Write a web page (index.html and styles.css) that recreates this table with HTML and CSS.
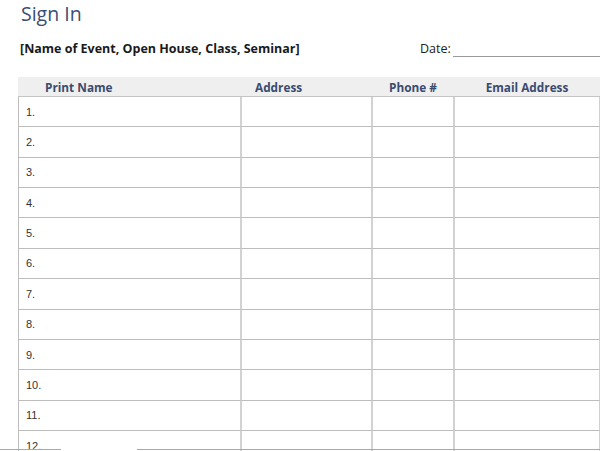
FILE: index.html
```html
<!DOCTYPE html>
<html>
<head>
<meta charset="utf-8">
<link rel="stylesheet" href="styles.css">
</head>
<body>
<div class="page">
  <h1 class="title">Sign In</h1>
  <div class="info">
    <div class="event">[Name of Event, Open House, Class, Seminar]</div>
    <div class="date"><span class="date-label">Date:</span><span class="date-line"></span></div>
  </div>
  <div class="sheet">
    <div class="head">
      <div class="h h-name">Print Name</div>
      <div class="h h-addr">Address</div>
      <div class="h h-phone">Phone #</div>
      <div class="h h-email">Email Address</div>
    </div>
    <div class="rows">
      <div class="c c1">1.</div><div class="c"></div><div class="c"></div><div class="c last"></div>
      <div class="c c1">2.</div><div class="c"></div><div class="c"></div><div class="c last"></div>
      <div class="c c1">3.</div><div class="c"></div><div class="c"></div><div class="c last"></div>
      <div class="c c1">4.</div><div class="c"></div><div class="c"></div><div class="c last"></div>
      <div class="c c1">5.</div><div class="c"></div><div class="c"></div><div class="c last"></div>
      <div class="c c1">6.</div><div class="c"></div><div class="c"></div><div class="c last"></div>
      <div class="c c1">7.</div><div class="c"></div><div class="c"></div><div class="c last"></div>
      <div class="c c1">8.</div><div class="c"></div><div class="c"></div><div class="c last"></div>
      <div class="c c1">9.</div><div class="c"></div><div class="c"></div><div class="c last"></div>
      <div class="c c1">10.</div><div class="c"></div><div class="c"></div><div class="c last"></div>
      <div class="c c1">11.</div><div class="c"></div><div class="c"></div><div class="c last"></div>
      <div class="c c1">12.</div><div class="c"></div><div class="c"></div><div class="c last"></div>
    </div>
  </div>
  <div class="edge edge-a"></div>
  <div class="edge edge-b"></div>
</div>
</body>
</html>
```
FILE: styles.css
```css
* { box-sizing: border-box; }
html, body { margin: 0; padding: 0; background: #fff; }
.page {
  position: relative;
  width: 600px;
  height: 451px;
  overflow: hidden;
  background: #fff;
}
.title {
  margin: 0;
  padding: 1px 0 0 21px;
  height: 32px;
  font-family: "Open Sans", sans-serif;
  font-weight: 400;
  font-size: 19.5px;
  line-height: 26px;
  color: #3b4e73;
}
.info {
  display: flex;
  align-items: flex-end;
  height: 25px;
  padding-left: 20px;
}
.event {
  font-family: "Open Sans", sans-serif;
  font-weight: 700;
  font-size: 12.5px;
  line-height: 16px;
  color: #1a1a1a;
  width: 400px;
}
.date {
  display: flex;
  align-items: flex-end;
}
.date-label {
  font-family: "Open Sans", sans-serif;
  font-size: 12.5px;
  line-height: 16px;
  color: #222;
  padding-right: 2px;
}
.date-line {
  width: 147px;
  height: 1px;
  background: #9a9a9a;
  margin-bottom: 0px;
}
.sheet {
  margin: 20px 0 0 18px;
  width: 582px;
}
.head {
  display: grid;
  grid-template-columns: 223px 131px 82px 146px;
  height: 20px;
  background: #efefef;
  border-bottom: 1px solid #c4c4c4;
}
.h {
  font-family: "Open Sans", sans-serif;
  font-weight: 700;
  font-size: 11.8px;
  line-height: 21px;
  color: #3a4b70;
}
.h-name { padding-left: 27px; }
.h-addr { padding-left: 14px; }
.h-phone, .h-email { text-align: center; }
.rows {
  display: grid;
  grid-template-columns: 223px 131px 82px 146px;
  grid-auto-rows: 30.36px;
  border-left: 1px solid #bdbdbd;
}
.c {
  border-right: 2px solid #d2d2d2;
  border-bottom: 1px solid #bcbcbc;
}
.c.last { border-right: 1px solid #d0d0d0; margin-right: 1px; }
.c1 {
  font-family: "Liberation Sans", Arial, sans-serif;
  font-size: 11px;
  color: #333;
  padding-left: 7px;
  display: flex;
  align-items: center;
}
.edge {
  position: absolute;
  bottom: 1px;
  height: 1px;
  background: #aaa;
}
.edge-a { left: 0; width: 61px; }
.edge-b { left: 137px; right: 0; }
```
